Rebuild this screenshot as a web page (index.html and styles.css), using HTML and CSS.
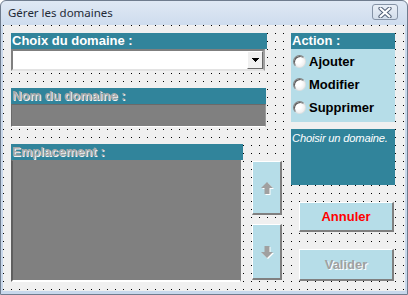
FILE: index.html
```html
<!DOCTYPE html>
<html lang="fr">
<head>
<meta charset="utf-8">
<title>Gérer les domaines</title>
<link rel="stylesheet" href="styles.css">
</head>
<body>
<div class="window">
  <div class="titlebar">
    <span class="title">Gérer les domaines</span>
    <span class="close">
      <svg width="14" height="11" viewBox="0 0 14 11">
        <path d="M2.5 1.5 L11.5 9.5 M11.5 1.5 L2.5 9.5" stroke="#56647a" stroke-width="4.2" stroke-linecap="round"/>
        <path d="M2.5 1.5 L11.5 9.5 M11.5 1.5 L2.5 9.5" stroke="#ffffff" stroke-width="2.2" stroke-linecap="round"/>
      </svg>
    </span>
  </div>
  <div class="client">
    <div class="left">
      <div class="hdr hdr-choix">Choix du domaine :</div>
      <div class="combo">
        <div class="combo-text"></div>
        <div class="combo-btn">
          <svg width="7" height="5" viewBox="0 0 7 5"><path d="M0 0H7V1H6V2H5V3H4V4H3V3H2V2H1V1H0Z" fill="#000"/></svg>
        </div>
      </div>
      <div class="hdr hdr-nom disabled">Nom du domaine :</div>
      <div class="field"></div>
      <div class="bottom-row">
        <div class="empl">
          <div class="hdr hdr-empl disabled">Emplacement :</div>
          <div class="listbox"></div>
        </div>
        <div class="arrows">
          <div class="btn arrow-btn up">
            <svg width="14" height="14" viewBox="0 0 14 14">
              <polygon points="7,1 13,7 9.5,7 9.5,13 4.5,13 4.5,7 1,7" fill="#ffffff" transform="translate(1,1)"/>
              <polygon points="7,1 13,7 9.5,7 9.5,13 4.5,13 4.5,7 1,7" fill="#a0a0a0"/>
            </svg>
          </div>
          <div class="btn arrow-btn down">
            <svg width="14" height="14" viewBox="0 0 14 14">
              <polygon points="4.5,1 9.5,1 9.5,7 13,7 7,13 1,7 4.5,7" fill="#ffffff" transform="translate(1,1)"/>
              <polygon points="4.5,1 9.5,1 9.5,7 13,7 7,13 1,7 4.5,7" fill="#a0a0a0"/>
            </svg>
          </div>
        </div>
      </div>
    </div>
    <div class="right">
      <div class="action">
        <div class="hdr hdr-action">Action :</div>
        <div class="radios">
          <label class="radio"><span class="dot"></span>Ajouter</label>
          <label class="radio"><span class="dot"></span>Modifier</label>
          <label class="radio"><span class="dot"></span>Supprimer</label>
        </div>
      </div>
      <div class="message">Choisir un domaine.</div>
      <div class="btn cmd annuler">Annuler</div>
      <div class="btn cmd valider">Valider</div>
    </div>
  </div>
</div>
</body>
</html>
```
FILE: styles.css
```css
html, body {
  margin: 0;
  padding: 0;
  background: #ffffff;
}

.window {
  width: 408px;
  height: 295px;
  box-sizing: border-box;
  border: 1px solid #6f7c8e;
  border-radius: 6px 6px 0 0;
  background: linear-gradient(#dfe8f4, #cad9ec 30px, #c8d8ec);
  padding: 0 2px 3px 2px;
  display: flex;
  flex-direction: column;
  overflow: hidden;
}

.titlebar {
  height: 24px;
  flex: none;
  display: flex;
  align-items: center;
  justify-content: space-between;
  padding: 0 7px 0 5px;
}

.title {
  font-family: "Noto Sans", "Liberation Sans", sans-serif;
  font-size: 11.5px;
  color: #1f2a36;
  margin-top: -1px;
}

.close {
  width: 26px;
  height: 16px;
  box-sizing: border-box;
  border: 1px solid #8593a6;
  border-radius: 3px;
  background: linear-gradient(#e9eff7, #d3deeb);
  display: flex;
  align-items: center;
  justify-content: center;
  margin-top: -2px;
}

.client {
  flex: 1;
  background-color: #f0f0f0;
  background-image: conic-gradient(at 1px 1px, transparent 75%, #000 0);
  background-size: 8px 8px;
  background-position: 0 0;
  display: flex;
  padding: 8px 0 0 8px;
  gap: 9px;
}

.hdr {
  background: #31849b;
  color: #ffffff;
  font-family: "Liberation Sans", Arial, sans-serif;
  font-weight: bold;
  font-size: 13px;
  height: 16px;
  line-height: 16px;
  padding-left: 1px;
  white-space: nowrap;
}

.hdr.disabled {
  color: #a8a8a8;
  text-shadow: 1px 1px 0 #f4f4f4;
}

.left {
  width: 271px;
  flex: none;
  display: flex;
  flex-direction: column;
}

.hdr-choix { width: 255px; }

.combo {
  width: 254px;
  height: 22px;
  box-sizing: border-box;
  border-style: solid;
  border-width: 2px;
  border-color: #7f7f7f #a0a0a0 #e3e3e3 #7f7f7f;
  background: #ffffff;
  display: flex;
  justify-content: flex-end;
}

.combo-btn {
  width: 16px;
  height: 18px;
  box-sizing: border-box;
  background: #f0f0f0;
  border-style: solid;
  border-width: 1px;
  border-color: #ffffff #696969 #696969 #ffffff;
  display: flex;
  align-items: center;
  justify-content: center;
}

.hdr-nom {
  width: 254px;
  margin-top: 17px;
}

.field {
  width: 255px;
  height: 23px;
  box-sizing: border-box;
  background: #808080;
  border-style: solid;
  border-width: 1px;
  border-color: #6a6a6a #9a9a9a #ffffff #6a6a6a;
}

.bottom-row {
  display: flex;
  margin-top: 17px;
  gap: 9px;
}

.empl {
  width: 232px;
  display: flex;
  flex-direction: column;
}

.listbox {
  width: 230px;
  height: 122px;
  box-sizing: border-box;
  background: #808080;
  border-style: solid;
  border-width: 1px 1px 2px 2px;
  border-color: #808080 #808080 #ffffff #5f5f5f;
}

.arrows {
  display: flex;
  flex-direction: column;
  gap: 9px;
  margin-top: 17px;
}

.btn {
  background: #b6dde8;
  box-sizing: border-box;
  border-style: solid;
  border-width: 1px 2px 2px 1px;
  border-color: #ffffff #808080 #808080 #ffffff;
  display: flex;
  align-items: center;
  justify-content: center;
}

.arrow-btn {
  width: 30px;
}

.arrow-btn.up { height: 54px; }
.arrow-btn.down { height: 56px; }

.right {
  width: 104px;
  flex: none;
  display: flex;
  flex-direction: column;
}

.action {
  height: 89px;
  background: #b6dde8;
  display: flex;
  flex-direction: column;
}

.radios {
  display: flex;
  flex-direction: column;
  padding-top: 1px;
}

.radio {
  height: 23px;
  display: flex;
  align-items: center;
  gap: 3px;
  padding-left: 2px;
  font-family: "Liberation Sans", Arial, sans-serif;
  font-weight: bold;
  font-size: 13px;
  color: #000000;
}

.dot {
  width: 13px;
  height: 13px;
  box-sizing: border-box;
  border-radius: 50%;
  border: 1px solid;
  border-color: #808080 #e0e0e0 #e0e0e0 #808080;
  background: radial-gradient(circle at 40% 40%, #ffffff 30%, #e4e4e4 100%);
  box-shadow: inset 1px 1px 0 #5a5a5a;
  flex: none;
}

.message {
  margin-top: 7px;
  height: 56px;
  background: #31849b;
  color: #ffffff;
  font-family: "Liberation Sans", Arial, sans-serif;
  font-style: italic;
  font-size: 11.2px;
  letter-spacing: -0.2px;
  padding: 3px 0 0 1px;
  box-sizing: border-box;
}

.cmd {
  width: 95px;
  margin-left: 8px;
  font-family: "Liberation Sans", Arial, sans-serif;
  font-weight: bold;
  font-size: 13px;
}

.annuler {
  margin-top: 17px;
  height: 30px;
  color: #ff0000;
}

.valider {
  margin-top: 17px;
  height: 32px;
  color: #a0a0a0;
  text-shadow: 1px 1px 0 #ffffff;
}
```
